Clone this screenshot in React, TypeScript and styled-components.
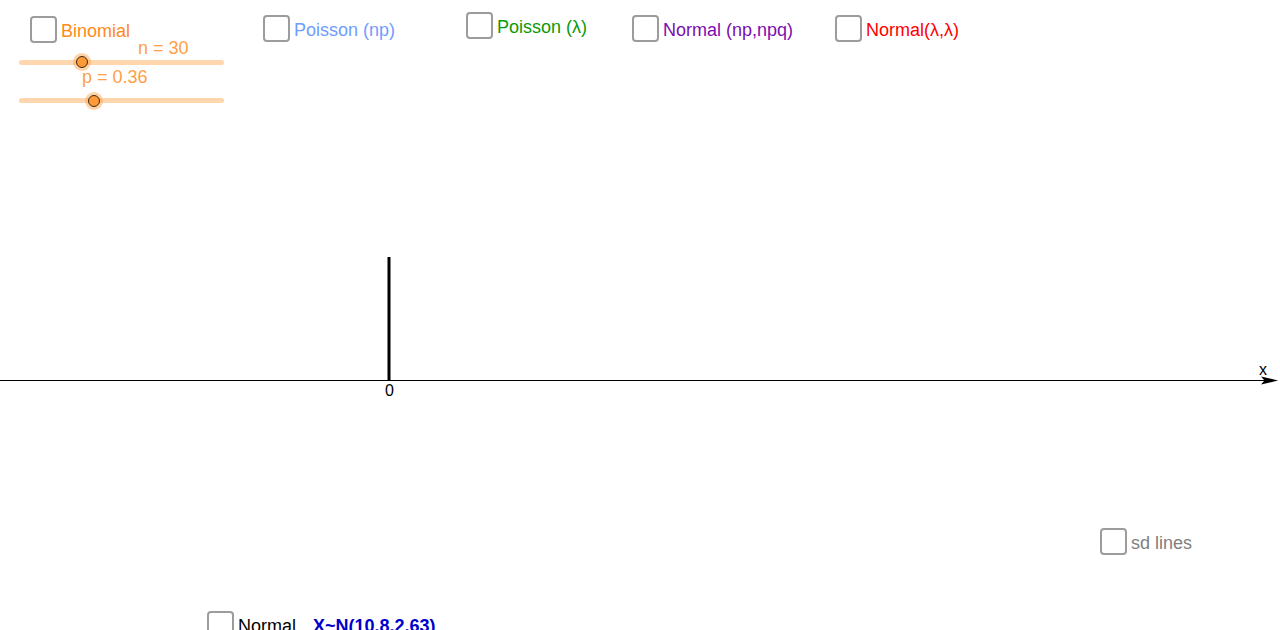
import React from "react";
import styled, { createGlobalStyle } from "styled-components";

const Global = createGlobalStyle`
  html, body { margin: 0; padding: 0; background: #ffffff; }
  body { font-family: "Liberation Sans", Arial, sans-serif; }
`;

/* GeoGebra-style free canvas: every object sits at its own spot on the graphics view */
const Stage = styled.div`
  position: relative;
  width: 1280px;
  height: 630px;
  overflow: hidden;
  background: #ffffff;
  font-family: "Liberation Sans", Arial, sans-serif;
`;

const GraphLayer = styled.svg`
  position: absolute;
  left: 0;
  top: 0;
  width: 1280px;
  height: 630px;
`;

const CheckItem = styled.label<{ $x: number; $y: number; $color: string }>`
  position: absolute;
  left: ${(p) => p.$x}px;
  top: ${(p) => p.$y}px;
  display: flex;
  align-items: center;
  gap: 4px;
  color: ${(p) => p.$color};
  font-size: 18px;
  line-height: 18px;
  white-space: nowrap;
  cursor: pointer;
`;

const Box = styled.span`
  display: block;
  width: 27px;
  height: 27px;
  box-sizing: border-box;
  border: 2px solid #9c9c9c;
  border-radius: 4px;
  background: #ffffff;
  flex: none;
`;

const Caption = styled.span`
  position: relative;
  top: 1px;
`;

const Formula = styled.span`
  margin-left: 13px;
  color: #0000cc;
  font-weight: bold;
  position: relative;
  top: 1px;
`;

const Slider = styled.div<{ $x: number; $y: number; $w: number }>`
  position: absolute;
  left: ${(p) => p.$x}px;
  top: ${(p) => p.$y - 2.5}px;
  width: ${(p) => p.$w}px;
  height: 5px;
  border-radius: 3px;
  background: #ffd6ad;
`;

const Knob = styled.span<{ $pos: number }>`
  position: absolute;
  left: ${(p) => p.$pos - 9}px;
  top: -6.5px;
  width: 18px;
  height: 18px;
  border-radius: 50%;
  background: rgba(255, 165, 80, 0.5);
  display: flex;
  align-items: center;
  justify-content: center;

  &::after {
    content: "";
    display: block;
    width: 12px;
    height: 12px;
    box-sizing: border-box;
    border-radius: 50%;
    background: #ff9a36;
    border: 1.3px solid #3a2a1a;
  }
`;

const SliderLabel = styled.span<{ $dx: number; $dy: number }>`
  position: absolute;
  left: ${(p) => p.$dx}px;
  top: ${(p) => p.$dy}px;
  color: #ff9f45;
  font-size: 18px;
  line-height: 18px;
  white-space: nowrap;
`;

type Item = { label: string; x: number; y: number; color: string };

const items: Item[] = [
  { label: "Binomial", x: 30, y: 16, color: "#ff8a1a" },
  { label: "Poisson (np)", x: 263, y: 15, color: "#6f9cff" },
  { label: "Poisson (λ)", x: 466, y: 12, color: "#0a9a0a" },
  { label: "Normal (np,npq)", x: 632, y: 15, color: "#7a0db0" },
  { label: "Normal(λ,λ)", x: 835, y: 15, color: "#ff0000" },
  { label: "sd lines", x: 1100, y: 528, color: "#808080" },
];

export default function App() {
  return (
    <>
      <Global />
      <Stage>
        <GraphLayer viewBox="0 0 1280 630">
          <line x1="0" y1="380.5" x2="1266" y2="380.5" stroke="#000" strokeWidth="1" />
          <path d="M1278 380.5 L1261 376.5 L1264.5 380.5 L1261 384.5 Z" fill="#000" />
          <line x1="389" y1="257" x2="389" y2="381" stroke="#000" strokeWidth="3" />
          <text x="1263" y="375" fontSize="16" fontFamily="Liberation Sans, Arial, sans-serif" textAnchor="middle" fill="#000">x</text>
          <text x="389.5" y="395.5" fontSize="16" fontFamily="Liberation Sans, Arial, sans-serif" textAnchor="middle" fill="#000">0</text>
        </GraphLayer>

        {items.map((it) => (
          <CheckItem key={it.label} $x={it.x} $y={it.y} $color={it.color}>
            <Box />
            <Caption>{it.label}</Caption>
          </CheckItem>
        ))}

        <Slider $x={19} $y={62} $w={205}>
          <SliderLabel $dx={119} $dy={-21}>n = 30</SliderLabel>
          <Knob $pos={63} />
        </Slider>
        <Slider $x={19} $y={100.5} $w={205}>
          <SliderLabel $dx={63} $dy={-30}>p = 0.36</SliderLabel>
          <Knob $pos={74.5} />
        </Slider>

        <CheckItem $x={207} $y={611} $color="#000000">
          <Box />
          <Caption>Normal</Caption>
          <Formula>X~N(10.8,2.63)</Formula>
        </CheckItem>
      </Stage>
    </>
  );
}
